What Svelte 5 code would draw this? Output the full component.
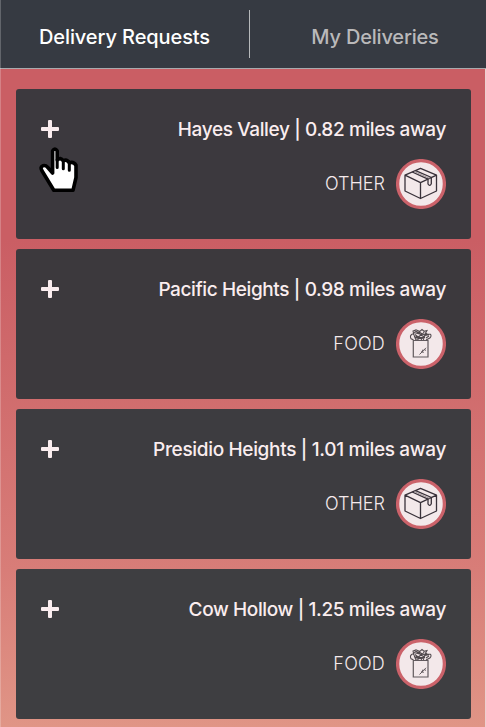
<script>
  const requests = [
    { place: 'Hayes Valley', miles: '0.82', type: 'OTHER', spacing: -0.38, shade: '#3c393e' },
    { place: 'Pacific Heights', miles: '0.98', type: 'FOOD', spacing: -0.39, shade: '#3c393d' },
    { place: 'Presidio Heights', miles: '1.01', type: 'OTHER', spacing: -0.33, shade: '#3d3c40' },
    { place: 'Cow Hollow', miles: '1.25', type: 'FOOD', spacing: -0.37, shade: '#3e3e41' }
  ];
</script>

<div class="app">
  <nav>
    <button class="tab active">Delivery Requests</button>
    <span class="divider"></span>
    <button class="tab">My Deliveries</button>
  </nav>
  <main>
    {#each requests as r}
      <article style:background={r.shade}>
        <header>
          <svg class="plus" viewBox="0 0 18 18"><rect x="7" y="0" width="4" height="18" rx="1" /><rect x="0" y="7" width="18" height="4" rx="1" /></svg>
          <h2 style:letter-spacing="{r.spacing}px">{r.place} | {r.miles} miles away</h2>
        </header>
        <div class="kind">
          <span class:food={r.type === 'FOOD'}>{r.type}</span>
          <svg class="badge" viewBox="0 0 50 50">
            <circle cx="25" cy="25" r="23.4" />
            {#if r.type === 'OTHER'}
              <g class="box">
                <path d="M9 16.2L24.5 9.4L40.5 16.2V32L24.5 39.5L9 32ZM9 16.2L24.5 23.6L40.5 16.2M24.5 23.6V39.5" />
                <path d="M16.2 13L32 20.2M19.6 11.6L35.5 18.5M32 20.2V25Q33.8 27.8 35.3 24.8V18.5" />
                <path class="seam" d="M18 12.4L33.6 19.4" />
              </g>
            {:else}
              <g class="bag">
                <path d="M17.3 21.5H32V38H17.3Z" />
                <path class="produce" d="M17.5 20.8L15 19.8Q13.5 16.5 16 15.2Q18 14.5 18.5 17.5L20 21M18 16L17 12L20 10.8L23.8 12.5L26 10.5L28 12.2L31 11.6L29 15L34.3 15.2Q36 17 33.8 19L30 21M18 13.5L25.5 15.5L22 18.5L19.5 17M20 12.2L27.5 17.5L25 21M23 13L29 16.5L33 15.8M22 21V18L25 16M27.5 21L28 18L31 14.2M20 20L28.5 19M19 15.5L24 19.5M28.5 12.5L25 17M30 19L33 17M18.5 12L25 14M19 18.5H29" />
                <path class="leaf" d="M23.5 35.5L30 28.8M25 32.8L27.8 33.3M26.8 30.6L26.4 33.1M28.2 30.7L30 31.3" />
              </g>
            {/if}
          </svg>
        </div>
      </article>
    {/each}
  </main>
  <svg class="cursor" viewBox="0 0 40 47">
    <path d="M13.6 5Q15.9 1 18.2 5V14Q21.5 10.8 24.3 14.8Q27.8 12.8 30.3 16.8Q34.5 15.2 37 19.2V31.5L34 44.3H14.8L2.8 24.5Q0.9 20.7 4 19.7Q6.6 19 8.6 21.2L13.6 27Z" />
    <path class="finger" d="M18.2 13.5V21.5M24.3 15.2V22.8M30.3 17.3V24.2" />
  </svg>
</div>

<style>
  :global(body) { margin: 0; overflow: hidden; }
  .app {
    position: relative;
    box-sizing: border-box;
    width: 486px;
    height: 727px;
    overflow: hidden;
    font-family: Inter, "Liberation Sans", sans-serif;
    background: linear-gradient(#ca5e64 0, #ca5e64 240px, #d87d78 570px, #e09586 727px);
  }
  .app::before {
    content: '';
    position: absolute;
    inset: 0 auto 0 0;
    width: 1px;
    background: rgba(255, 255, 255, .22);
  }
  .app::after {
    content: '';
    position: absolute;
    inset: 69px 0 0 auto;
    width: 1px;
    background: #ecd0d0;
  }
  nav {
    box-sizing: border-box;
    height: 69px;
    display: flex;
    align-items: flex-start;
    background: #363a42;
    border-bottom: 1px solid #a9aaad;
  }
  .tab {
    width: 249px;
    flex: none;
    height: 68px;
    padding: 0;
    border: 0;
    background: none;
    color: #bab9ba;
    font: 500 20px/74px Inter, sans-serif;
    letter-spacing: -.2px;
    text-align: center;
    white-space: nowrap;
  }
  .tab.active { color: #fff; letter-spacing: -.1px; }
  .tab:last-child { width: 250px; }
  .divider { width: 1px; flex: none; height: 48px; margin-top: 10px; background: #b7b9bb; }
  main { display: flex; flex-direction: column; gap: 10px; padding: 20px 15px 0 16px; }
  article { box-sizing: border-box; height: 150px; padding: 25px; border-radius: 3px; }
  header { display: flex; height: 30px; justify-content: space-between; align-items: center; }
  .plus { width: 18px; height: 18px; fill: #faedef; }
  h2 { margin: 0; color: #faedef; font-size: 19px; font-weight: 500; line-height: 30px; padding-top: 2px; white-space: nowrap; }
  .kind { display: flex; justify-content: flex-end; align-items: center; height: 50px; margin-top: 15px; gap: 11px; }
  .kind span { color: #f5eaec; font-size: 18px; font-weight: 300; line-height: 50px; }
  .kind span.food { letter-spacing: .2px; }
  .badge { width: 50px; height: 50px; fill: none; }
  circle { fill: #f3e8ea; stroke: #cb626a; stroke-width: 3.3; }
  .box { stroke: #39313a; stroke-width: 1.3; stroke-linejoin: round; }
  .seam { stroke: #8c8286; stroke-width: .8; }
  .bag { stroke: #61595d; stroke-width: 1.2; }
  .produce { stroke: #514a4e; stroke-width: 1.05; }
  .leaf { stroke-width: 1; }
  .cursor {
    position: absolute;
    left: 39px;
    top: 146px;
    width: 40px;
    height: 47px;
    fill: #fff;
    stroke: #000;
    stroke-width: 3.6;
    stroke-linejoin: round;
  }
  .finger { fill: none; stroke-width: 3; stroke-linecap: round; }
</style>
